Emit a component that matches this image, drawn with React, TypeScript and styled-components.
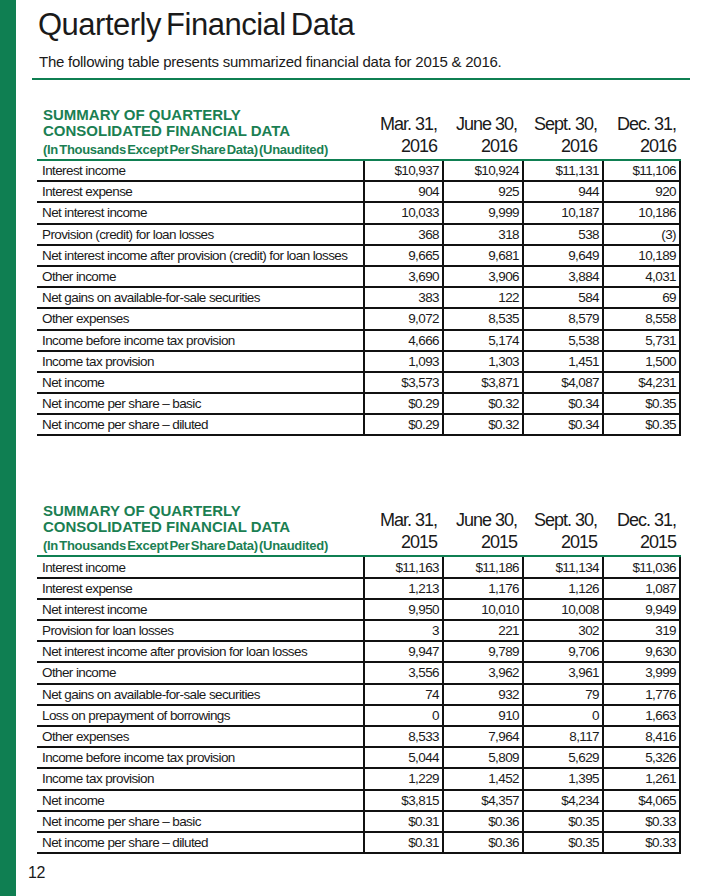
import React from "react";
import styled, { createGlobalStyle } from "styled-components";

const GlobalStyle = createGlobalStyle`
  html, body {
    margin:0;
    padding:0;
    background:#ffffff;
  }
  body {
    font-family:"Liberation Sans", Arial, sans-serif;
    color:#1a1a1a;
  }
`

const GREEN = "#0f7f52";

const Page = styled.div`
  display:flex;
  width:720px;
  min-height:896px;
`
const SideBar = styled.div`
  flex:none;
  width:16px;
  background:${GREEN};
`
const Content = styled.main`
  flex:1;
  display:flex;
  flex-direction:column;
  padding:7px 0 0 12px;
`
const Header = styled.header`
  margin-left:4px;
  width:658px;
`
const Title = styled.h1`
  margin:0;
  padding-left:6px;
  font-size:31px;
  font-weight:400;
  line-height:36px;
  letter-spacing:-0.5px;
  word-spacing:-3px;
`
const Subtitle = styled.p`
  margin:9.5px 0 0;
  padding-left:7px;
  font-size:15px;
  line-height:18px;
  letter-spacing:-0.25px;
`
const Rule = styled.hr`
  margin:7.5px 0 0;
  border:0;
  height:2px;
  background:${GREEN};
`
const Section = styled.section<{ $gap: number }>`
  margin:${p => p.$gap}px 0 0 9px;
  width:644px;
`
const Grid = styled.div`
  display:grid;
  grid-template-columns:326px 79px 80px 80px 79px;
`
const HeadRow = styled(Grid)`
  border-bottom:2px solid ${GREEN};
  padding-bottom:2px;
`
const Caption = styled.div`
  padding-left:6px;
  color:#1b7f53;
  font-weight:700;
`
const CaptionTitle = styled.div`
  font-size:15px;
  line-height:16px;
`
const CaptionNote = styled.div`
  margin-top:3px;
  font-size:13px;
  line-height:15px;
  letter-spacing:-0.3px;
  word-spacing:-2px;
`
const DateHead = styled.div`
  align-self:end;
  padding-right:5px;
  text-align:right;
  font-size:18px;
  line-height:22px;
  letter-spacing:-1px;
  white-space:nowrap;
`
const Row = styled(Grid)`
  height:21.2px;
  box-sizing:border-box;
  border-bottom:2px solid #111;
`
const Label = styled.div`
  display:flex;
  align-items:center;
  padding-left:5px;
  font-size:13.5px;
  letter-spacing:-0.6px;
  white-space:nowrap;
`
const Value = styled.div<{ $last?: boolean }>`
  display:flex;
  align-items:center;
  justify-content:flex-end;
  box-sizing:border-box;
  padding-right:${p => (p.$last ? 3 : 3)}px;
  border-left:2px solid #111;
  border-right:${p => (p.$last ? "2px solid #111" : "0")};
  font-size:13.5px;
  letter-spacing:-0.6px;
`
const PageNumber = styled.div`
  margin-top:10px;
  font-size:16px;
  line-height:18px;
  letter-spacing:-0.5px;
`

type Line = [string, string, string, string, string];

const rows2016: Line[] = [
  ["Interest income", "$10,937", "$10,924", "$11,131", "$11,106"],
  ["Interest expense", "904", "925", "944", "920"],
  ["Net interest income", "10,033", "9,999", "10,187", "10,186"],
  ["Provision (credit) for loan losses", "368", "318", "538", "(3)"],
  ["Net interest income after provision (credit) for loan losses", "9,665", "9,681", "9,649", "10,189"],
  ["Other income", "3,690", "3,906", "3,884", "4,031"],
  ["Net gains on available-for-sale securities", "383", "122", "584", "69"],
  ["Other expenses", "9,072", "8,535", "8,579", "8,558"],
  ["Income before income tax provision", "4,666", "5,174", "5,538", "5,731"],
  ["Income tax provision", "1,093", "1,303", "1,451", "1,500"],
  ["Net income", "$3,573", "$3,871", "$4,087", "$4,231"],
  ["Net income per share – basic", "$0.29", "$0.32", "$0.34", "$0.35"],
  ["Net income per share – diluted", "$0.29", "$0.32", "$0.34", "$0.35"],
];

const rows2015: Line[] = [
  ["Interest income", "$11,163", "$11,186", "$11,134", "$11,036"],
  ["Interest expense", "1,213", "1,176", "1,126", "1,087"],
  ["Net interest income", "9,950", "10,010", "10,008", "9,949"],
  ["Provision for loan losses", "3", "221", "302", "319"],
  ["Net interest income after provision for loan losses", "9,947", "9,789", "9,706", "9,630"],
  ["Other income", "3,556", "3,962", "3,961", "3,999"],
  ["Net gains on available-for-sale securities", "74", "932", "79", "1,776"],
  ["Loss on prepayment of borrowings", "0", "910", "0", "1,663"],
  ["Other expenses", "8,533", "7,964", "8,117", "8,416"],
  ["Income before income tax provision", "5,044", "5,809", "5,629", "5,326"],
  ["Income tax provision", "1,229", "1,452", "1,395", "1,261"],
  ["Net income", "$3,815", "$4,357", "$4,234", "$4,065"],
  ["Net income per share – basic", "$0.31", "$0.36", "$0.35", "$0.33"],
  ["Net income per share – diluted", "$0.31", "$0.36", "$0.35", "$0.33"],
];

const quarters = ["Mar. 31,", "June 30,", "Sept. 30,", "Dec. 31,"];

const SummaryTable = ({ year, rows, gap }: { year: string; rows: Line[]; gap: number }) => {
  return <Section $gap={gap}>
    <HeadRow>
      <Caption>
        <CaptionTitle>SUMMARY OF QUARTERLY</CaptionTitle>
        <CaptionTitle>CONSOLIDATED FINANCIAL DATA</CaptionTitle>
        <CaptionNote>(In Thousands Except Per Share Data) (Unaudited)</CaptionNote>
      </Caption>
      {quarters.map(q => (
        <DateHead key={q}>{q}<br />{year}</DateHead>
      ))}
    </HeadRow>
    {rows.map(([label, ...values]) => (
      <Row key={label}>
        <Label>{label}</Label>
        {values.map((v, i) => (
          <Value key={i} $last={i === values.length - 1}>{v}</Value>
        ))}
      </Row>
    ))}
  </Section>
}

export default function App() {
  return (
    <Page>
      <GlobalStyle />
      <SideBar />
      <Content>
        <Header>
          <Title>Quarterly Financial Data</Title>
          <Subtitle>The following table presents summarized financial data for 2015 &amp; 2016.</Subtitle>
          <Rule />
        </Header>
        <SummaryTable year="2016" rows={rows2016} gap={27} />
        <SummaryTable year="2015" rows={rows2015} gap={67} />
        <PageNumber>12</PageNumber>
      </Content>
    </Page>
  );
}
